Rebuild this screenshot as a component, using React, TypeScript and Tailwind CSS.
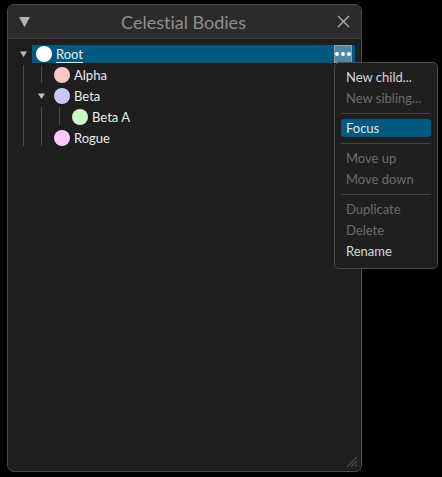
import React from 'react';

type Node = {
  label: string;
  color: string;
  depth: number;
  open?: boolean;
  selected?: boolean;
  last?: boolean;
};

const nodes: Node[] = [
  { label: 'Root', color: '#ffffff', depth: 0, open: true, selected: true },
  { label: 'Alpha', color: '#ffc8c8', depth: 1 },
  { label: 'Beta', color: '#c8c8ff', depth: 1, open: true },
  { label: 'Beta A', color: '#c8ffc8', depth: 2 },
  { label: 'Rogue', color: '#ffc8ff', depth: 1, last: true },
];

type MenuItem = { label: string; disabled?: boolean; active?: boolean } | 'sep';

const menu: MenuItem[] = [
  { label: 'New child...' },
  { label: 'New sibling...', disabled: true },
  'sep',
  { label: 'Focus', active: true },
  'sep',
  { label: 'Move up', disabled: true },
  { label: 'Move down', disabled: true },
  'sep',
  { label: 'Duplicate', disabled: true },
  { label: 'Delete', disabled: true },
  { label: 'Rename' },
];

const Arrow = ({ className }: { className?: string }) => (
  <svg className={className} width="7" height="6" viewBox="0 0 7 6">
    <path d="M0 0.5 L7 0.5 L3.5 6 Z" fill="#bdbdbd" />
  </svg>
);

const TreeRow = ({ node }: { node: Node }) => {
  const cols = [];
  for (let i = 0; i <= node.depth; i++) {
    const isOwn = i === node.depth;
    cols.push(
      <div key={i} className="w-[18px] h-full flex justify-center shrink-0">
        {isOwn && node.open ? (
          <Arrow className="mt-[6px]" />
        ) : (
          <div className={`w-px bg-[#4a4a4a] -mt-px ${node.last || (isOwn && !node.open) ? 'h-[18px]' : 'h-[22px]'}`} />
        )}
      </div>
    );
  }

  return (
    <div className="h-[21px] flex items-start">
      {cols}
      <div className={`flex-1 h-[18px] flex items-center ${node.selected ? 'bg-[#005a80]' : ''}`}>
        <div className="w-4 h-4 rounded-full ml-1 shrink-0" style={{ backgroundColor: node.color }} />
        <span className={`ml-1 text-[13px] leading-none text-[#ececec] ${node.selected ? 'underline underline-offset-[3px] decoration-1' : ''}`}>
          {node.label}
        </span>
        {node.selected && (
          <div className="ml-auto mr-[3px] w-[18px] h-[18px] bg-[#4c87a3] border border-[#9c9c9c] flex items-center justify-center gap-[2px]">
            <span className="w-[4px] h-[4px] rounded-full bg-white" />
            <span className="w-[4px] h-[4px] rounded-full bg-white" />
            <span className="w-[4px] h-[4px] rounded-full bg-white" />
          </div>
        )}
      </div>
    </div>
  );
};

export default function App() {
  return (
    <div
      className="relative w-[442px] h-[477px] bg-black overflow-hidden [font-variant-ligatures:none]"
      style={{ fontFamily: 'Lato, "Noto Sans", sans-serif' }}
    >
      <div className="absolute left-[7px] top-[4px] w-[355px] h-[468px] rounded-[7px] border border-[#4b4b4b] bg-[#1e1e1e] flex flex-col overflow-hidden">
        <div className="h-[34px] shrink-0 bg-[#2b2b2b] border-b border-[#3a3a3a] flex items-center px-[11px]">
          <svg width="11" height="10" viewBox="0 0 11 10" className="mt-[1px]">
            <path d="M0 0 L11 0 L5.5 10 Z" fill="#b4b4b4" />
          </svg>
          <div className="flex-1 flex justify-center">
            <span className="text-[18px] leading-none text-[#8e8e8e]">Celestial Bodies</span>
          </div>
          <svg width="13" height="13" viewBox="0 0 13 13">
            <path d="M1 1 L12 12 M12 1 L1 12" stroke="#b4b4b4" strokeWidth="1.3" />
          </svg>
        </div>

        <div className="flex flex-col pt-[6px] pl-[6px] pr-[6px]">
          {nodes.map((n) => (
            <TreeRow key={n.label} node={n} />
          ))}
        </div>

        <svg className="absolute right-[3px] bottom-[3px]" width="12" height="12" viewBox="0 0 12 12">
          <path d="M11 1 L1 11 M11 5 L5 11 M11 9 L9 11" stroke="#4c4c4c" strokeWidth="1.2" />
        </svg>
      </div>

      <div className="absolute left-[334px] top-[62px] w-[104px] h-[207px] rounded-[5px] border border-[#4a4a4a] bg-[#1f1f1f] flex flex-col gap-[3px] pt-[5px] px-[6px]">
        {menu.map((m, i) =>
          m === 'sep' ? (
            <div key={i} className="h-[6px] flex items-center">
              <div className="w-full h-px bg-[#444444]" />
            </div>
          ) : (
            <div
              key={i}
              className={`h-[18px] flex items-center pl-[5px] rounded-[3px] text-[13px] leading-none ${
                m.active ? 'bg-[#005a80] text-[#e4e4e4]' : m.disabled ? 'text-[#6c6c6c]' : 'text-[#d8d8d8]'
              }`}
            >
              {m.label}
            </div>
          )
        )}
      </div>
    </div>
  );
}
